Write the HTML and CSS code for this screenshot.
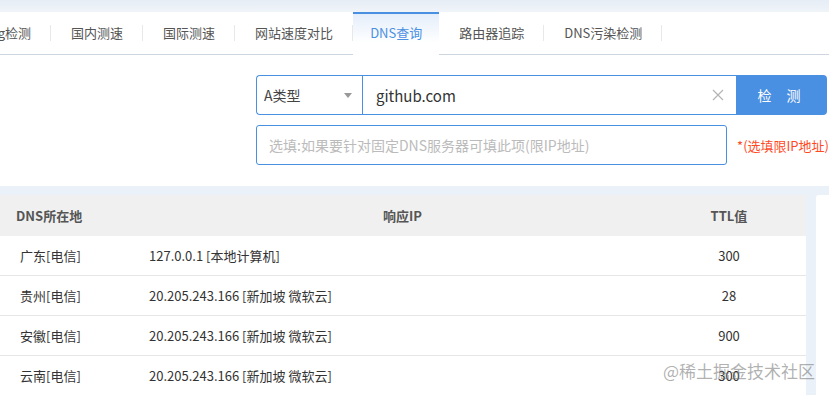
FILE: index.html
```html
<!DOCTYPE html>
<html lang="zh-CN">
<head>
  <meta charset="UTF-8" />
  <meta name="viewport" content="width=device-width, initial-scale=1.0"/>
  <title>DNS查询</title>
  <link rel="stylesheet" href="styles.css">
</head>
<body>
  <div class="top-strip"></div>

  <ul class="tabs">
    <li class="tab">Ping检测</li>
    <li class="tab">国内测速</li>
    <li class="tab">国际测速</li>
    <li class="tab">网站速度对比</li>
    <li class="tab active">DNS查询</li>
    <li class="tab">路由器追踪</li>
    <li class="tab">DNS污染检测</li>
  </ul>

  <div class="query">
    <div class="query-row">
      <div class="type-select">
        <span>A类型</span>
        <span class="caret"></span>
      </div>
      <div class="host-input">
        <span class="host-value">github.com</span>
        <svg class="clear" width="12" height="12" viewBox="0 0 12 12">
          <path d="M1 1 L11 11 M11 1 L1 11" stroke="#b4b4b4" stroke-width="1.2" fill="none"/>
        </svg>
      </div>
      <button class="check-btn">检 测</button>
    </div>
    <div class="query-row">
      <div class="server-input">选填:如果要针对固定DNS服务器可填此项(限IP地址)</div>
      <span class="note">*(选填限IP地址)</span>
    </div>
  </div>

  <div class="result">
    <div class="result-card">
      <div class="thead">
        <div class="cell col-loc">DNS所在地</div>
        <div class="cell col-ip">响应IP</div>
        <div class="cell col-ttl">TTL值</div>
      </div>
      <div class="trow">
        <div class="cell col-loc">广东[电信]</div>
        <div class="cell col-ip">127.0.0.1 [本地计算机]</div>
        <div class="cell col-ttl">300</div>
      </div>
      <div class="trow">
        <div class="cell col-loc">贵州[电信]</div>
        <div class="cell col-ip">20.205.243.166 [新加坡 微软云]</div>
        <div class="cell col-ttl">28</div>
      </div>
      <div class="trow">
        <div class="cell col-loc">安徽[电信]</div>
        <div class="cell col-ip">20.205.243.166 [新加坡 微软云]</div>
        <div class="cell col-ttl">900</div>
      </div>
      <div class="trow">
        <div class="cell col-loc">云南[电信]</div>
        <div class="cell col-ip">20.205.243.166 [新加坡 微软云]</div>
        <div class="cell col-ttl">300</div>
      </div>
    </div>
    <div class="side-panel"></div>
  </div>

  <div class="watermark">@稀土掘金技术社区</div>
</body>
</html>
```

FILE: styles.css
```css
:root {
  --primary: #4a90e2;
  --text: #333;
  --muted: #555;
  --line: #e6e6e6;
  --page-bg: #eaf1f8;
}

* {
  box-sizing: border-box;
}

html,
body {
  height: 100%;
}

body {
  margin: 0;
  overflow: hidden;
  position: relative;
  font-family: "Noto Sans CJK SC", "Noto Sans", sans-serif;
  color: var(--text);
  background: var(--page-bg);
}

.top-strip {
  height: 12px;
  background: linear-gradient(to bottom, #e6edf6, #f0f4f9);
}

/* tabs */
.tabs {
  display: flex;
  margin: 0 0 0 -42px;
  padding: 0;
  list-style: none;
  height: 43px;
  background: #fff;
  border-bottom: 1px solid #cdd5e1;
}

.tab {
  position: relative;
  padding: 0 20px;
  font-size: 13px;
  line-height: 42px;
  color: var(--muted);
  white-space: nowrap;
}

.tab::after {
  content: "";
  position: absolute;
  right: 0;
  top: 13px;
  width: 1px;
  height: 16px;
  background: #e8e8e8;
}

.tab.active {
  height: 43px;
  line-height: 38px;
  padding: 0 17px;
  border-top: 2px solid var(--primary);
  color: var(--primary);
  background: linear-gradient(to bottom, #e4eefb, #fff 70%);
}

.tab.active::after {
  display: none;
}

/* query form */
.query {
  display: flex;
  flex-direction: column;
  gap: 10px;
  padding: 20px 0 21px 256px;
  background: #fff;
}

.query-row {
  display: flex;
  align-items: center;
}

.type-select {
  display: flex;
  align-items: center;
  justify-content: space-between;
  width: 106px;
  height: 40px;
  padding: 0 10px 0 7px;
  border: 1px solid var(--primary);
  border-right: none;
  border-radius: 4px 0 0 4px;
  font-size: 14px;
  color: #444;
}

.caret {
  width: 0;
  height: 0;
  border-left: 4px solid transparent;
  border-right: 4px solid transparent;
  border-top: 5px solid #999;
}

.host-input {
  display: flex;
  align-items: center;
  justify-content: space-between;
  width: 375px;
  height: 40px;
  padding: 0 12px 0 13px;
  border: 1px solid var(--primary);
  font-size: 15px;
  color: #333;
}

.check-btn {
  width: 90px;
  height: 40px;
  border: none;
  border-radius: 0 4px 4px 0;
  background: var(--primary);
  color: #fff;
  font-family: inherit;
  font-size: 14px;
  letter-spacing: 6px;
  padding-left: 6px;
}

.server-input {
  width: 473px;
  height: 40px;
  padding: 0 12px;
  border: 1px solid var(--primary);
  border-radius: 3px;
  font-size: 14px;
  line-height: 38px;
  color: #bbb;
  white-space: nowrap;
}

.note {
  margin-left: 10px;
  font-size: 13px;
  color: #ff4a1f;
  white-space: nowrap;
}

/* result table */
.result {
  display: flex;
  gap: 10px;
  padding-top: 9px;
}

.result-card {
  width: 806px;
  flex: none;
  background: #fff;
}

.side-panel {
  flex: 1;
  height: 220px;
  background: #fff;
  border-radius: 3px 0 0 0;
}

.thead,
.trow {
  display: grid;
  grid-template-columns: 129px 1fr 154px;
  align-items: center;
}

.thead {
  height: 41px;
  background: #f0f0f0;
  font-size: 13px;
  font-weight: 700;
  color: #555;
}

.trow {
  height: 40px;
  border-bottom: 1px solid var(--line);
  font-size: 13px;
  color: var(--text);
}

.thead .col-loc {
  padding-left: 16px;
}

.trow .col-loc {
  padding-left: 20px;
}

.thead .col-ip {
  text-align: center;
  padding-left: 24px;
}

.trow .col-ip {
  padding-left: 20px;
}

.col-ttl {
  text-align: center;
}

.watermark {
  position: absolute;
  right: 14px;
  bottom: 12px;
  font-size: 17px;
  color: rgba(110, 110, 110, 0.55);
  white-space: nowrap;
}
```
